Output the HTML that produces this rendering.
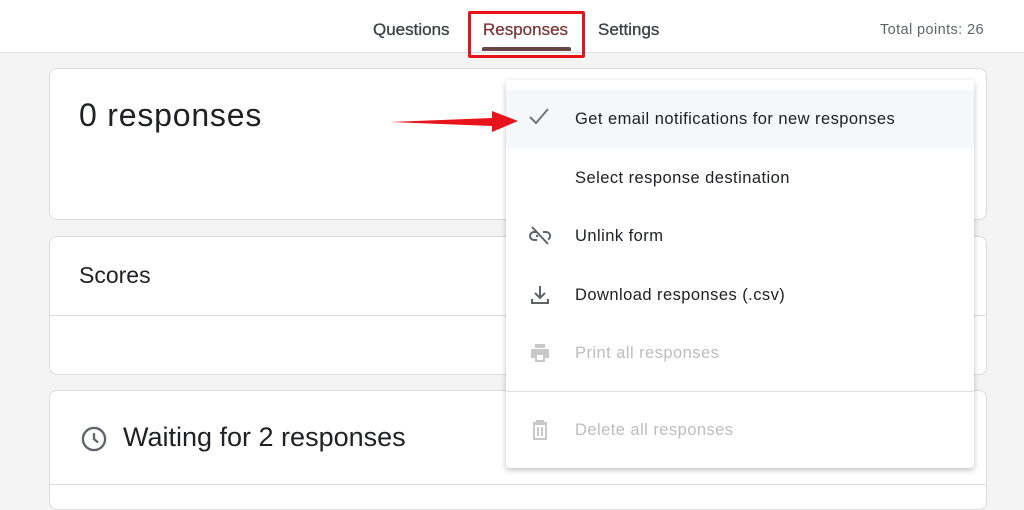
<!DOCTYPE html>
<html><head><style>
*{margin:0;padding:0;box-sizing:border-box}
body{width:1024px;height:496px;overflow:hidden;background:#f4f4f4;font-family:"Liberation Sans",sans-serif;position:relative;color:#202124}
.hdr{position:absolute;left:0;top:0;width:1024px;height:53px;background:#fff;border-bottom:1px solid #e0e0e0}
.tab{position:absolute;top:20px;font-size:17px;color:#3c4043;-webkit-text-stroke:0.3px #3c4043}
.card{position:absolute;left:49px;width:938px;background:#fff;border:1px solid #dadce0;border-radius:8px}
.menu{position:absolute;left:506px;top:80px;width:468px;height:388px;background:#fff;border-radius:4px;box-shadow:0 2px 6px rgba(0,0,0,.25)}
.it{position:absolute;left:69px;font-size:16.5px;color:#202124;letter-spacing:0.45px}
.dis{color:#bdbdbd}
svg.ic{position:absolute}
</style></head><body>
<div class="hdr">
<div class="tab" style="left:373px">Questions</div>
<div class="tab" style="left:483px;color:#7b3a3a;-webkit-text-stroke:0.3px #7b3a3a">Responses</div>
<div style="position:absolute;left:482px;top:47px;width:89px;height:4px;background:#6b4444;border-radius:2px 2px 0 0"></div>
<div class="tab" style="left:598px">Settings</div>
<div style="position:absolute;left:880px;top:22px;font-size:14.5px;color:#5f6368;letter-spacing:0.4px">Total points: 26</div>
</div>
<div style="position:absolute;left:468px;top:11px;width:117px;height:47px;border:3px solid #e8141c;border-radius:2px"></div>

<div class="card" style="top:68px;height:152px"><div style="position:absolute;left:29px;top:28px;font-size:32px;letter-spacing:0.8px">0 responses</div></div>
<div class="card" style="top:236px;height:139px"><div style="position:absolute;left:29px;top:25px;font-size:23px">Scores</div><div style="position:absolute;left:0;right:0;top:78px;border-top:1px solid #dadce0"></div></div>
<div class="card" style="top:390px;height:120px">
<svg class="ic" style="left:30px;top:34px" width="28" height="28" viewBox="0 0 24 24"><circle cx="12" cy="12" r="9.5" fill="none" stroke="#5f6368" stroke-width="2"/><path d="M12 7v5l3.5 3" fill="none" stroke="#5f6368" stroke-width="2"/></svg>
<div style="position:absolute;left:73px;top:31px;font-size:27px">Waiting for 2 responses</div>
<div style="position:absolute;left:0;right:0;top:93px;border-top:1px solid #dadce0"></div></div>

<div class="menu">
<div style="position:absolute;left:0;top:10px;width:468px;height:58px;background:#f5f7fb"></div>
<svg class="ic" style="left:20px;top:25px" width="26" height="24" viewBox="0 0 24 24"><path d="M3 12l6 6L21 4" fill="none" stroke="#757575" stroke-width="2"/></svg>
<div class="it" style="top:30px">Get email notifications for new responses</div>
<div class="it" style="top:89px">Select response destination</div>
<svg class="ic" style="left:21px;top:144px" width="26" height="24" viewBox="0 0 24 24"><path d="M9 8H6a4 4 0 0 0 0 8h3M15 8h3a4 4 0 0 1 2 7.5M8 12h2M4 3l16 17" fill="none" stroke="#5f6368" stroke-width="2"/></svg>
<div class="it" style="top:147px">Unlink form</div>
<svg class="ic" style="left:21px;top:203px" width="26" height="24" viewBox="0 0 24 24"><path d="M12 3v11M7 10l5 5 5-5M4 16v4h16v-4" fill="none" stroke="#5f6368" stroke-width="2"/></svg>
<div class="it" style="top:206px">Download responses (.csv)</div>
<svg class="ic" style="left:21px;top:261px" width="26" height="24" viewBox="0 0 24 24"><path d="M7 3h10v4H7zM4 8h16a1 1 0 0 1 1 1v8h-4v4H7v-4H3V9a1 1 0 0 1 1-1z" fill="#c8c8c8"/><rect x="9" y="14" width="6" height="5" fill="#fff"/></svg>
<div class="it dis" style="top:264px">Print all responses</div>
<div style="position:absolute;left:0;right:0;top:311px;border-top:1px solid #e0e0e0"></div>
<svg class="ic" style="left:21px;top:338px" width="26" height="24" viewBox="0 0 24 24"><path d="M5 5h14M9 5V3h6v2M6 6h12v15H6zM10 9v9M14 9v9" fill="none" stroke="#c8c8c8" stroke-width="2"/></svg>
<div class="it dis" style="top:341px">Delete all responses</div>
</div>

<svg style="position:absolute;left:388px;top:108px" width="135" height="28" viewBox="0 0 135 28"><path d="M2 14L104 10V3L130 13L104 24V18Z" fill="#e8141c"/></svg>
</body></html>
